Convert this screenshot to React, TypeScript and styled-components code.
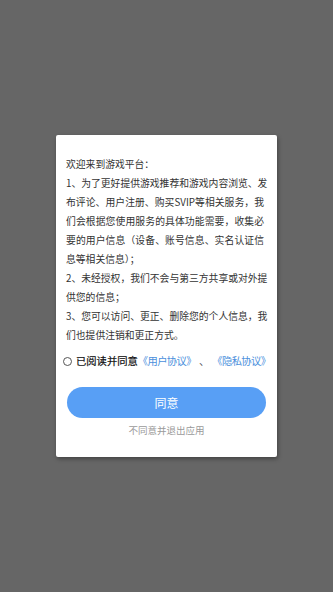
import styled, { createGlobalStyle } from "styled-components";

const GlobalStyle = createGlobalStyle`
  html, body {
    margin: 0;
    padding: 0;
    background: #666666;
  }
  body {
    font-family: "Noto Sans CJK SC", "Noto Sans", sans-serif;
  }
`;

const Screen = styled.div`
  width: 333px;
  height: 592px;
  background: #666666;
  display: flex;
  justify-content: center;
  align-items: center;
`;

const Dialog = styled.div`
  width: 221px;
  box-sizing: border-box;
  padding: 20px 10px 0 10px;
  background: #ffffff;
  border-radius: 2px;
  box-shadow: 1px 2px 4px rgba(0, 0, 0, 0.35);
  display: flex;
  flex-direction: column;
`;

const Notice = styled.div`
  font-size: 9.8px;
  line-height: 19.1px;
  color: #333333;
`;

const Line = styled.div<{ $full?: boolean }>`
  white-space: nowrap;
  text-align: left;
  text-align-last: ${(p) => (p.$full ? "justify" : "left")};
  width: 198px;
`;

const AgreeRow = styled.label`
  display: flex;
  align-items: center;
  margin-top: 7px;
  font-size: 10.3px;
  line-height: 18px;
  white-space: nowrap;
`;

const Radio = styled.span`
  width: 7px;
  height: 7px;
  border: 1px solid #555555;
  border-radius: 50%;
  margin: 0 4px 0 -3px;
  flex: none;
`;

const Plain = styled.span`
  color: #111111;
  font-weight: 400;
  -webkit-text-stroke: 0.2px #111111;
`;

const Link = styled.span`
  color: #4a8fdc;
  letter-spacing: -0.6px;
`;

const Sep = styled.span`
  color: #555555;
  margin: 0 3px 0 3px;
`;

const AgreeButton = styled.button`
  margin-top: 17px;
  width: 199px;
  height: 31px;
  align-self: center;
  border: none;
  border-radius: 16px;
  background: #589ff5;
  color: #ffffff;
  font-family: "Noto Sans CJK SC", sans-serif;
  font-size: 12px;
`;

const Exit = styled.div`
  text-align: center;
  font-size: 9.5px;
  color: #9a9a9a;
  margin-top: 5px;
  padding-bottom: 20px;
  line-height: 14px;
`;

const lines: { text: string; full?: boolean }[] = [
  { text: "欢迎来到游戏平台：" },
  { text: "1、为了更好提供游戏推荐和游戏内容浏览、发", full: true },
  { text: "布评论、用户注册、购买SVIP等相关服务，我", full: true },
  { text: "们会根据您使用服务的具体功能需要，收集必", full: true },
  { text: "要的用户信息（设备、账号信息、实名认证信", full: true },
  { text: "息等相关信息）；" },
  { text: "2、未经授权，我们不会与第三方共享或对外提", full: true },
  { text: "供您的信息；" },
  { text: "3、您可以访问、更正、删除您的个人信息，我", full: true },
  { text: "们也提供注销和更正方式。" },
];

export default function App() {
  return (
    <>
      <GlobalStyle />
      <Screen>
        <Dialog>
          <Notice>
            {lines.map((l, i) => (
              <Line key={i} $full={l.full}>
                {l.text}
              </Line>
            ))}
          </Notice>
          <AgreeRow>
            <Radio />
            <Plain>已阅读并同意</Plain>
            <Link>《用户协议》</Link>
            <Sep>、</Sep>
            <Link>《隐私协议》</Link>
          </AgreeRow>
          <AgreeButton>同意</AgreeButton>
          <Exit>不同意并退出应用</Exit>
        </Dialog>
      </Screen>
    </>
  );
}
